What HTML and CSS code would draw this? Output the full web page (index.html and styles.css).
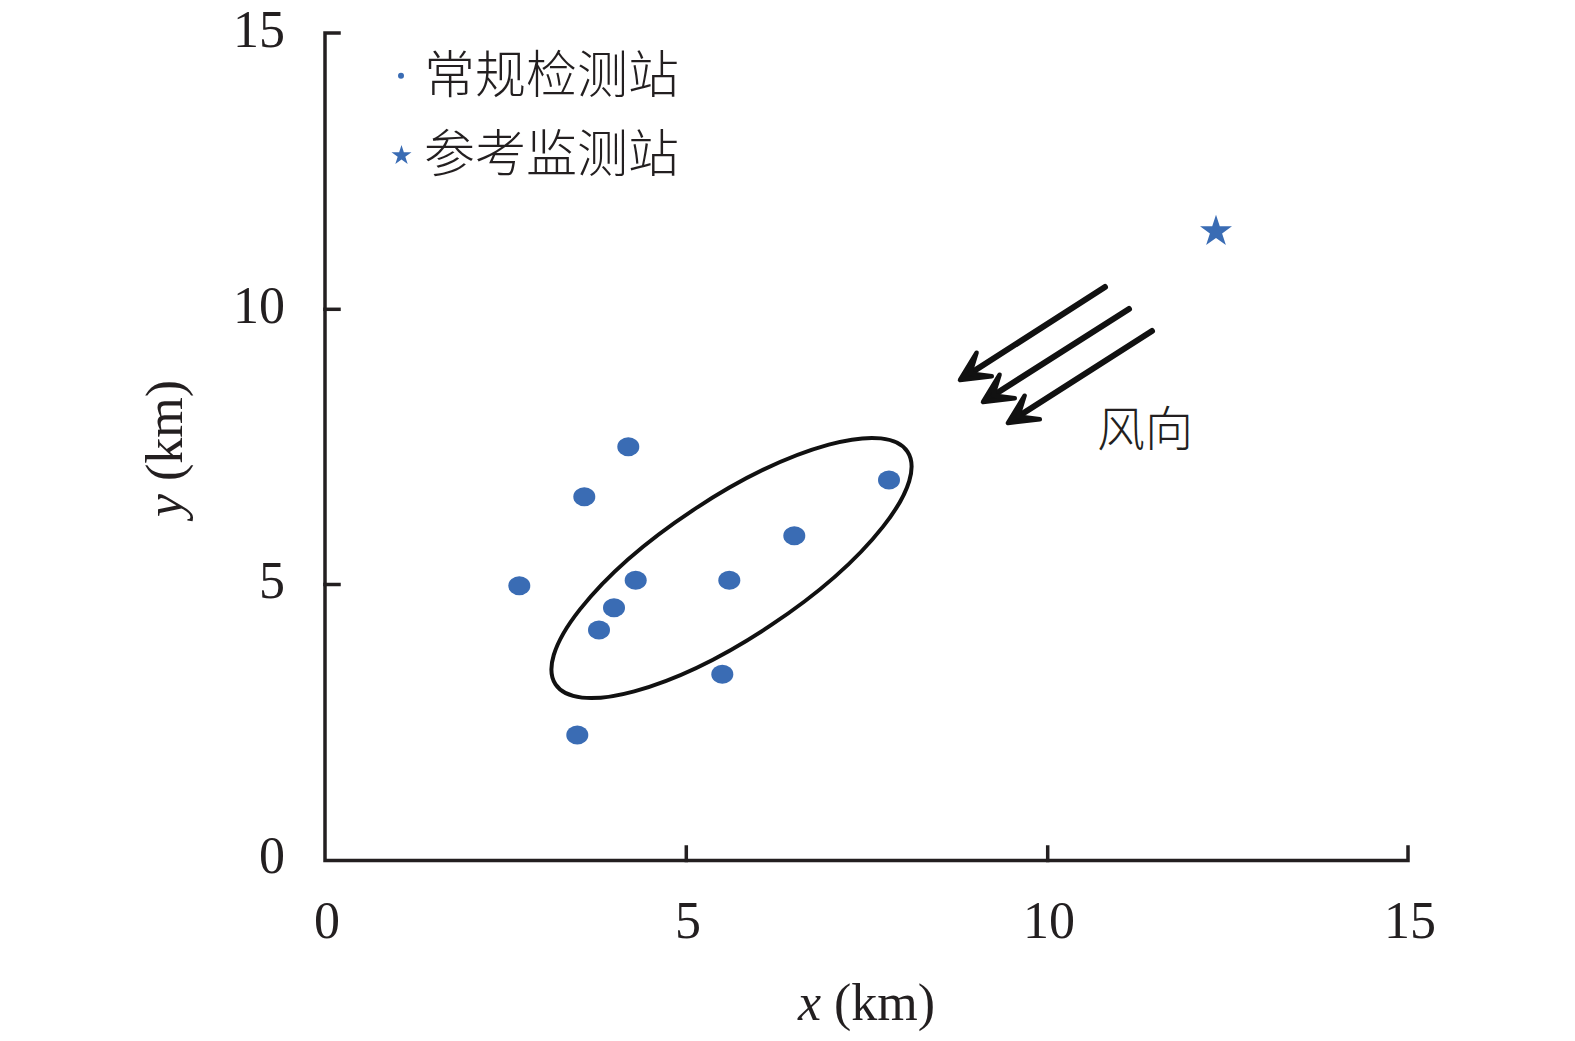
FILE: index.html
```html
<!DOCTYPE html>
<html lang="zh">
<head>
<meta charset="utf-8">
<title>监测站分布</title>
<link rel="stylesheet" href="styles.css">
</head>
<body>
<main class="page">
<svg class="chart" width="1575" height="1041" viewBox="0 0 1575 1041" xmlns="http://www.w3.org/2000/svg">
  <!-- axes -->
  <g class="axis">
    <path d="M339 33 H325 V860.5 H1408 V847"/>
    <path d="M325 309.3 H339"/>
    <path d="M325 584.5 H339"/>
    <path d="M686.3 860.5 V847"/>
    <path d="M1047.7 860.5 V847"/>
  </g>
  <!-- y tick labels -->
  <g class="tick tick-y">
    <text x="285" y="47">15</text>
    <text x="285" y="323">10</text>
    <text x="285" y="598">5</text>
    <text x="285" y="873">0</text>
  </g>
  <!-- x tick labels -->
  <g class="tick tick-x">
    <text x="327" y="938">0</text>
    <text x="688" y="938">5</text>
    <text x="1049" y="938">10</text>
    <text x="1410" y="938">15</text>
  </g>
  <!-- axis titles -->
  <text class="title" x="866.5" y="1020"><tspan class="var">x</tspan> (km)</text>
  <text class="title" transform="translate(182 448.5) rotate(-90)"><tspan class="var">y</tspan> (km)</text>

  <!-- legend -->
  <circle class="marker" cx="401" cy="75.7" r="3"/>
  <text class="legend" x="424" y="93">常规检测站</text>
  <polygon class="marker" transform="translate(401.5 155.5) scale(10.5)" points="0,-1 0.2245,-0.309 0.9511,-0.309 0.3633,0.118 0.5878,0.809 0,0.382 -0.5878,0.809 -0.3633,0.118 -0.9511,-0.309 -0.2245,-0.309"/>
  <text class="legend" x="424" y="172">参考监测站</text>

  <!-- reference station -->
  <polygon class="marker" transform="translate(1216 231.5) scale(16.8)" points="0,-1 0.2245,-0.309 0.9511,-0.309 0.3633,0.118 0.5878,0.809 0,0.382 -0.5878,0.809 -0.3633,0.118 -0.9511,-0.309 -0.2245,-0.309"/>

  <!-- regular stations -->
  <g class="marker">
    <ellipse cx="628.3" cy="446.7" rx="11" ry="9.5"/>
    <ellipse cx="584.3" cy="496.7" rx="11" ry="9.5"/>
    <ellipse cx="519.3" cy="585.7" rx="11" ry="9.5"/>
    <ellipse cx="635.7" cy="580.3" rx="11" ry="9.5"/>
    <ellipse cx="729.3" cy="580.3" rx="11" ry="9.5"/>
    <ellipse cx="614" cy="607.7" rx="11" ry="9.5"/>
    <ellipse cx="599" cy="630" rx="11" ry="9.5"/>
    <ellipse cx="722.3" cy="674.3" rx="11" ry="9.5"/>
    <ellipse cx="577.3" cy="735" rx="11" ry="9.5"/>
    <ellipse cx="794.3" cy="535.7" rx="11" ry="9.5"/>
    <ellipse cx="889" cy="480" rx="11" ry="9.5"/>
  </g>

  <!-- cluster ellipse -->
  <ellipse class="ring" cx="731.5" cy="568" rx="211" ry="69.5" transform="rotate(-33.5 731.5 568)"/>

  <!-- wind arrows -->
  <g class="arrow">
    <path class="shaft" d="M1105 287 L970.1 373.5"/>
    <polygon class="head" points="976.6,352.7 960,380 991.8,376.3 970.1,373.5"/>
    <path class="shaft" d="M1129 309 L993.1 395.5"/>
    <polygon class="head" points="999.6,374.7 983,402 1014.8,398.3 993.1,395.5"/>
    <path class="shaft" d="M1152 331 L1018.1 416.5"/>
    <polygon class="head" points="1024.6,395.7 1008,423 1039.8,419.3 1018.1,416.5"/>
  </g>
  <text class="legend wind" x="1097" y="446">风向</text>
</svg>
</main>
</body>
</html>
```

FILE: styles.css
```css
html, body {
  margin: 0;
  padding: 0;
  background: #ffffff;
}

.page {
  width: 1575px;
  height: 1041px;
  overflow: hidden;
}

.chart {
  display: block;
}

.axis path {
  fill: none;
  stroke: #231f20;
  stroke-width: 3.5;
  stroke-linecap: square;
  stroke-linejoin: miter;
}

.tick {
  font-family: "Liberation Serif", "Times New Roman", serif;
  font-size: 52px;
  fill: #231f20;
}

.tick-y text {
  text-anchor: end;
}

.tick-x text {
  text-anchor: middle;
}

.title {
  font-family: "Liberation Serif", "Times New Roman", serif;
  font-size: 52px;
  fill: #231f20;
  text-anchor: middle;
}

.title .var {
  font-style: italic;
}

.legend {
  font-family: "Noto Sans CJK SC", "Noto Sans CJK JP", sans-serif;
  font-weight: 300;
  font-size: 51px;
  fill: #231f20;
}

.legend.wind {
  font-size: 48px;
}

.marker {
  fill: #3a6cb4;
}

.ring {
  fill: none;
  stroke: #111111;
  stroke-width: 4;
}

.arrow .shaft {
  fill: none;
  stroke: #111111;
  stroke-width: 6;
  stroke-linecap: round;
}

.arrow .head {
  fill: #111111;
  stroke: #111111;
  stroke-width: 4.5;
  stroke-linejoin: round;
}
```
